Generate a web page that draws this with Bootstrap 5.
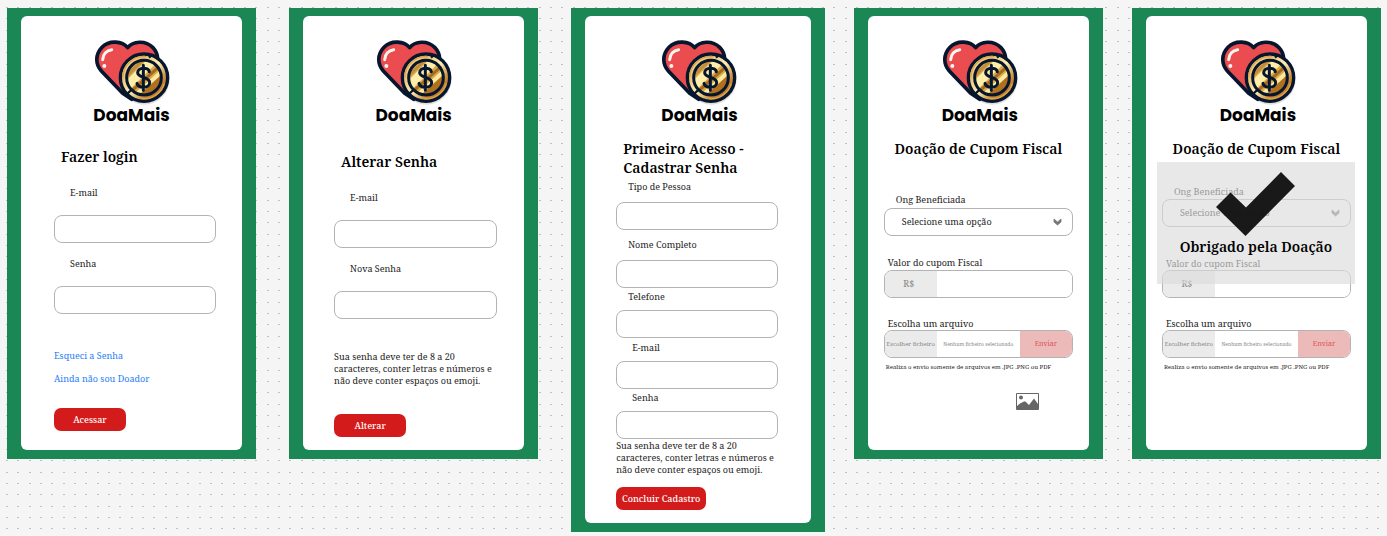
<!DOCTYPE html>
<html lang="pt-BR">
<head>
<meta charset="utf-8">
<meta name="viewport" content="width=device-width, initial-scale=1">
<title>DoaMais</title>
<link href="https://cdn.jsdelivr.net/npm/bootstrap@5.3.0/dist/css/bootstrap.min.css" rel="stylesheet">
<style>
body{font-family:"Noto Serif","DejaVu Serif Condensed","DejaVu Serif",serif;font-size:9px;line-height:12px;color:#222;background:#f5f5f5 url("data:image/svg+xml,%3Csvg xmlns='http://www.w3.org/2000/svg' width='34' height='34' fill='%23c0c0c0'%3E%3Cpath d='M0 0h2v1H0zM11 0h2v1h-2zM23 0h2v1h-2zM0 11h2v1H0zM11 11h2v1h-2zM23 11h2v1h-2zM0 23h2v1H0zM11 23h2v1h-2zM23 23h2v1h-2z'/%3E%3C/svg%3E") 6px 7px}
.board{padding:8px 6px 5px 7px}
.phone{flex:249 1 0;min-width:0;background:#1a8754;padding:8px 14px 9px}
.phone-wide{flex-grow:254}
.gap-a{margin-right:33px}.gap-b{margin-right:29px}
.sheet{background:#fff;border-radius:6px;padding-top:24px;min-height:434px}
.brand{height:84px}
.brand-right{padding-left:3px}
.brand svg{width:76px;height:65px;flex:none}
.brand-name{font:700 17px/20px Poppins,Inter,sans-serif;color:#000}
h1,.thanks{font-size:14px;line-height:19px;font-weight:600;color:#000;margin:0}
.form-a{padding:0 26px 0 33px}.form-b{padding:0 27px 0 31px}.form-c{padding:0 33px 0 31px}.form-d{padding:0 16px}
.in-2{padding-left:2px}.in-4{padding-left:4px}.in-7{padding-left:7px}.in-12{padding-left:12px}.in-16{padding-left:16px}
.caption{display:block}
.field{display:block;width:100%;height:28px;border:1px solid #b3b3b3;border-radius:8px;background:#fff;color:#222;font-size:9px;line-height:12px;overflow:hidden}
select.field{appearance:none;padding:0 17px}
.bundle input{border:0;min-width:0;outline:0}
.seg{width:52px;background:#ebebeb;color:#858585;flex:none;white-space:nowrap}
.tiny{font-size:6px;line-height:10px}
.micro{font-size:5px;line-height:8px;color:#858585;white-space:nowrap}
.send{border:0;background:#edbaba;color:#d95555;padding:0;font-size:7px}
.chevron{right:11px;top:10px;width:9px;height:8px;pointer-events:none}
.act{border:0;border-radius:7px;background:#d41b1b;color:#fff;height:23px;width:72px;padding:0;font-size:9px;font-weight:500}
.act-wide{width:90px}
a.go{display:table;color:#2680f5;text-decoration:none}
.m1{margin-top:1px}.m2{margin-top:2px}.m3{margin-top:3px}.m4{margin-top:4px}.m7{margin-top:7px}.m9{margin-top:9px}.m11{margin-top:11px}.m15{margin-top:15px}.m16{margin-top:16px}.m20{margin-top:20px}.m21{margin-top:21px}.m23{margin-top:23px}.m27{margin-top:27px}.m28{margin-top:28px}.m32{margin-top:32px}.m36{margin-top:36px}
.end-13{padding-bottom:13px}.end-20{padding-bottom:19px}
.overlay{left:11px;right:12px;top:146px;height:122px;padding-top:10px;background:rgba(219,219,219,.64)}
.overlay svg{width:79px;height:64px;opacity:.98}
.photo{width:23px;height:17px;margin-right:34px}
</style>
</head>
<body>
<svg width="0" height="0" class="position-absolute" aria-hidden="true">
<defs>
<linearGradient id="gold" x1="0" y1="0" x2="1" y2="1"><stop offset="0" stop-color="#fff3c0"/><stop offset=".28" stop-color="#eac270"/><stop offset=".5" stop-color="#fff0b5"/><stop offset=".72" stop-color="#c98a35"/><stop offset="1" stop-color="#a95d12"/></linearGradient>
<clipPath id="disc"><circle cx="177" cy="140" r="51"/></clipPath>
<symbol id="logo" viewBox="27 27 228 195">
<circle cx="178" cy="145" r="76" fill="#000" opacity=".12"/>
<path d="M128 50C112 30 73 26 51 49C30 71 31 100 49 120L113 187L140 205L205 120C224 99 222 69 203 49C181 27 144 30 128 50Z" fill="#ea4c50" stroke="#07162f" stroke-width="11" stroke-linejoin="round"/>
<path d="M53 86C54 69 65 58 80 56" fill="none" stroke="#fff5ef" stroke-width="9" stroke-linecap="round"/>
<circle cx="58" cy="105" r="6" fill="#fff5ef"/>
<circle cx="177" cy="140" r="71" fill="url(#gold)" stroke="#07162f" stroke-width="10"/>
<path d="M113 140A64 64 0 0 1 184 77M238 158A64 64 0 0 1 170 203" fill="none" stroke="#dda34d" stroke-width="4"/>
<circle cx="177" cy="140" r="52" fill="#d9a94e"/>
<g clip-path="url(#disc)"><path d="M110 162L193 79L212 98L129 181Z" fill="#ffedaa"/><path d="M138 205L240 113" stroke="#ffe9a0" stroke-width="12"/><path d="M128 190L230 100" stroke="#a46b1e" stroke-width="9"/><path d="M160 208L243 133" stroke="#b0701d" stroke-width="20"/><path d="M110 148L180 82" stroke="#c08e3c" stroke-width="9"/></g>
<circle cx="177" cy="140" r="52" fill="none" stroke="#07162f" stroke-width="9"/>
<path d="M192 80L200 72M126 189L140 176" stroke="#07162f" stroke-width="7"/>
<path d="M175 103V178M193 122C190 107 158 108 158 125C158 141 194 136 194 155C194 173 160 173 156 157" fill="none" stroke="#07162f" stroke-width="9" stroke-linecap="round"/>
</symbol>
<symbol id="chev" viewBox="0 0 9 8"><path d="M1 1L4.500 4L8 1V4L4.500 7L1 4Z" fill="#777" stroke="#777" stroke-width=".8"/></symbol>
</defs>
</svg>
<main class="board d-flex align-items-start">

<section class="phone gap-a"><div class="sheet end-20">
<div class="brand d-flex flex-column align-items-center"><svg aria-hidden="true"><use href="#logo"/></svg><div class="brand-name">DoaMais</div></div>
<form class="form-a">
<h1 class="m23 in-7">Fazer login</h1>
<label class="caption m21 in-16" for="a1">E-mail</label><input class="field m16" id="a1" type="email">
<label class="caption m15 in-16" for="a2">Senha</label><input class="field m16" id="a2" type="password">
<a class="go m36" href="#">Esqueci a Senha</a>
<a class="go m11" href="#">Ainda não sou Doador</a>
<button class="act m23 d-block" type="button">Acessar</button>
</form></div></section>

<section class="phone gap-a"><div class="sheet end-13">
<div class="brand d-flex flex-column align-items-center"><svg aria-hidden="true"><use href="#logo"/></svg><div class="brand-name">DoaMais</div></div>
<form class="form-b">
<h1 class="m28 in-7">Alterar Senha</h1>
<label class="caption m21 in-16" for="b1">E-mail</label><input class="field m16" id="b1" type="email">
<label class="caption m15 in-16" for="b2">Nova Senha</label><input class="field m16" id="b2" type="password">
<p class="m32 mb-0 text-nowrap">Sua senha deve ter de 8 a 20<br>caracteres, conter letras e números e<br>não deve conter espaços ou emoji.</p>
<button class="act m27 d-block" type="button">Alterar</button>
</form></div></section>

<section class="phone phone-wide gap-b"><div class="sheet end-13">
<div class="brand brand-right d-flex flex-column align-items-center"><svg aria-hidden="true"><use href="#logo"/></svg><div class="brand-name">DoaMais</div></div>
<form class="form-c">
<h1 class="m15 in-7">Primeiro Acesso -<br>Cadastrar Senha</h1>
<label class="caption m4 in-12" for="c1">Tipo de Pessoa</label><input class="field m9" id="c1" type="text">
<label class="caption m9 in-12" for="c2">Nome Completo</label><input class="field m9" id="c2" type="text">
<label class="caption m3 in-12" for="c3">Telefone</label><input class="field m7" id="c3" type="tel">
<label class="caption m4 in-16" for="c4">E-mail</label><input class="field m7" id="c4" type="email">
<label class="caption m3 in-16" for="c5">Senha</label><input class="field m7" id="c5" type="password">
<p class="m1 mb-0 text-nowrap">Sua senha deve ter de 8 a 20<br>caracteres, conter letras e números e<br>não deve conter espaços ou emoji.</p>
<button class="act act-wide m11 d-block" type="button">Concluir Cadastro</button>
</form></div></section>

<section class="phone gap-b"><div class="sheet">
<div class="brand brand-right d-flex flex-column align-items-center"><svg aria-hidden="true"><use href="#logo"/></svg><div class="brand-name">DoaMais</div></div>
<form class="form-d">
<h1 class="m15 text-center text-nowrap">Doação de Cupom Fiscal</h1>
<label class="caption m36 in-12" for="d1">Ong Beneficiada</label>
<div class="position-relative m2"><select class="field" id="d1"><option>Selecione uma opção</option></select><svg class="chevron position-absolute" aria-hidden="true"><use href="#chev"/></svg></div>
<label class="caption m21 in-4" for="d2">Valor do cupom Fiscal</label>
<div class="field bundle d-flex m1"><span class="seg d-flex align-items-center justify-content-center pe-1">R$</span><input class="flex-fill" id="d2" type="text"></div>
<label class="caption m20 in-4" for="d3">Escolha um arquivo</label>
<div class="field bundle d-flex"><label class="seg tiny d-flex align-items-center justify-content-center" for="d3">Escolher ficheiro</label><input class="visually-hidden" id="d3" type="file"><span class="micro flex-fill d-flex align-items-center justify-content-center">Nenhum ficheiro selecionado</span><button class="seg send" type="button">Enviar</button></div>
<p class="tiny m4 mb-0 in-2 text-nowrap">Realiza o envio somente de arquivos em .JPG .PNG ou PDF</p>
<svg class="photo m21 d-block ms-auto" viewBox="0 0 23 17" role="img" aria-label="Imagem"><path d="M.5.5h22v16H.5z" fill="#fff" stroke="#666"/><circle cx="5" cy="4.500" r="2" fill="#666"/><path d="M1 13L4 10.500L8 8.500L9.500 8.500L13 12L18 5.500L22 11V16H1Z" fill="#666"/></svg>
</form></div></section>

<section class="phone"><div class="sheet position-relative">
<div class="brand brand-right d-flex flex-column align-items-center"><svg aria-hidden="true"><use href="#logo"/></svg><div class="brand-name">DoaMais</div></div>
<form class="form-d">
<h1 class="m15 text-center text-nowrap">Doação de Cupom Fiscal</h1>
<label class="caption m28 in-12" for="e1">Ong Beneficiada</label>
<div class="position-relative m1"><select class="field" id="e1"><option>Selecione uma opção</option></select><svg class="chevron position-absolute" aria-hidden="true"><use href="#chev"/></svg></div>
<label class="caption m27 pt-1 in-4" for="e2">Valor do cupom Fiscal</label>
<div class="field bundle d-flex"><span class="seg d-flex align-items-center justify-content-center pe-1">R$</span><input class="flex-fill" id="e2" type="text"></div>
<label class="caption m20 in-4" for="e3">Escolha um arquivo</label>
<div class="field bundle d-flex"><label class="seg tiny d-flex align-items-center justify-content-center" for="e3">Escolher ficheiro</label><input class="visually-hidden" id="e3" type="file"><span class="micro flex-fill d-flex align-items-center justify-content-center">Nenhum ficheiro selecionado</span><button class="seg send" type="button">Enviar</button></div>
<p class="tiny m4 mb-0 in-2 text-nowrap">Realiza o envio somente de arquivos em .JPG .PNG ou PDF</p>
</form>
<div class="overlay position-absolute text-center"><svg class="d-block mx-auto" viewBox="0 0 79 64" aria-hidden="true"><path d="M65 0L79 14L29.500 64L0 35L14.500 20.500L30 35.500Z" fill="#151515"/></svg><h2 class="thanks m1 text-nowrap">Obrigado pela Doação</h2></div>
</div></section>
</main>
<script src="https://cdn.jsdelivr.net/npm/bootstrap@5.3.0/dist/js/bootstrap.bundle.min.js"></script>
</body>
</html>
